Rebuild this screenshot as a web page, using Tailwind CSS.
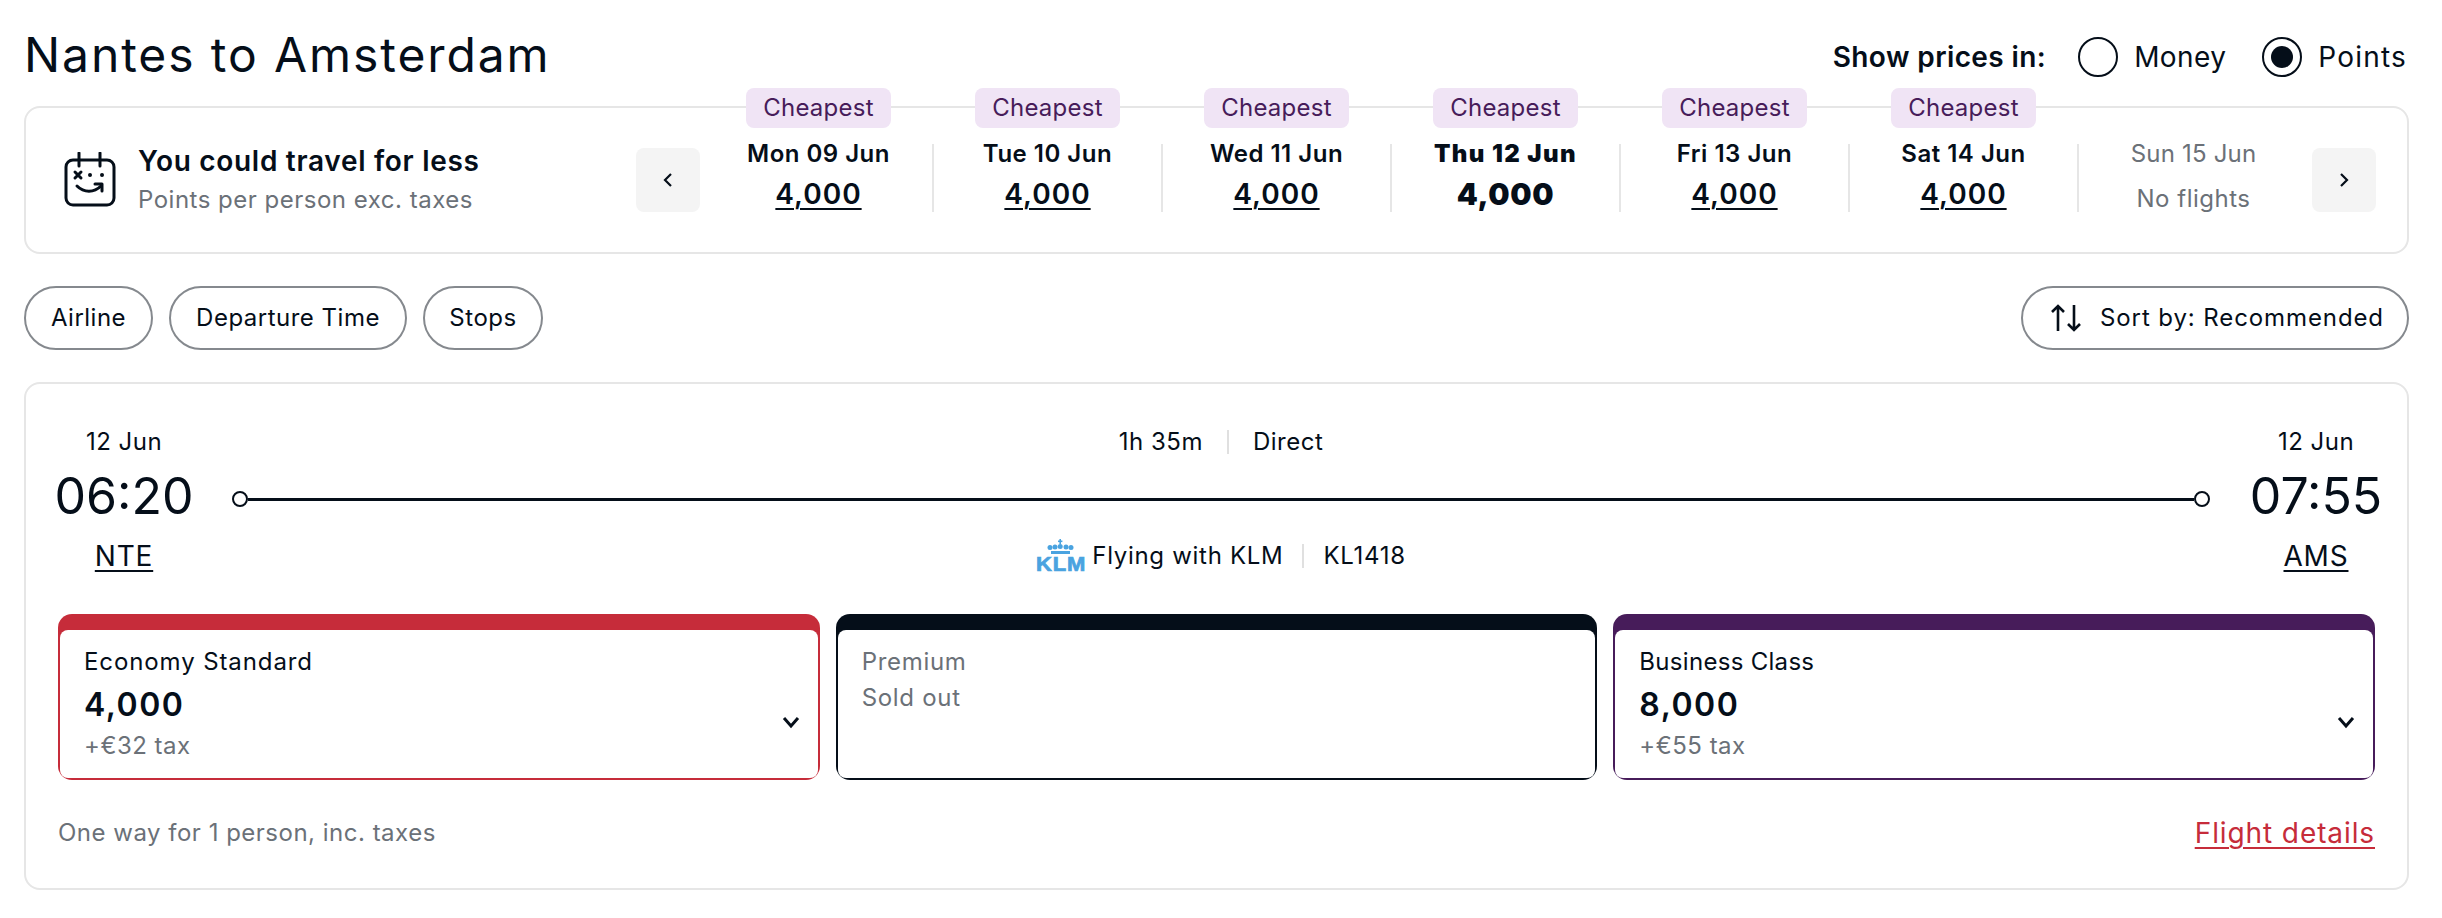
<!DOCTYPE html>
<html>

<head>
    <title>Nantes to Amsterdam</title>
    <script src="https://cdn.jsdelivr.net/npm/@tailwindcss/browser@4"></script>
</head>

<body class="bg-white text-[#050e19] tracking-[0.5px] [font-family:Inter,sans-serif]">
    <main class="w-[2442px] h-[918px] overflow-hidden pl-[24px] pr-[33px]">

        <!-- title + price mode -->
        <header class="h-[106px] flex items-center justify-between">
            <h1 class="text-[48px] mt-[3px] tracking-[1.9px]">Nantes to Amsterdam</h1>
            <div class="flex items-center mt-[8px] mr-[2px] text-[28px] tracking-[0.4px]">
                <span class="font-semibold mr-[32px]">Show prices in:</span>
                <span class="w-[40px] h-[40px] rounded-full border-2 border-[#050e19] mr-[16px]"></span>
                <span class="mr-[36px]">Money</span>
                <span class="w-[40px] h-[40px] rounded-full border-2 border-[#050e19] mr-[16px] flex items-center justify-center">
                    <span class="w-[22px] h-[22px] rounded-full bg-[#050e19]"></span>
                </span>
                <span class="tracking-[1.2px]">Points</span>
            </div>
        </header>

        <!-- date strip -->
        <section class="h-[148px] border-2 border-[#e6e6e6] rounded-[16px] flex items-center pl-[38px] pr-[31px]">
            <svg class="w-[52px] h-[56px] shrink-0 mr-[22px] -mt-[1px]" viewBox="0 0 52 56" fill="none" stroke="#050e19" stroke-width="3" stroke-linecap="round" stroke-linejoin="round">
                <rect x="2" y="8" width="48" height="45" rx="7" />
                <path d="M15 1v13M36 1v13" />
                <path d="M11 20l6 6M17 20l-6 6" />
                <path d="M26 23h.01M38 23h.01" stroke-width="4" />
                <path d="M13 34c7 7 17 7 24 0" />
                <path d="M31 32h7v7" />
            </svg>
            <div class="w-[498px] shrink-0">
                <div class="text-[28px] font-semibold leading-[36px] -mt-[2px] tracking-[0.7px]">You could travel for less</div>
                <div class="text-[24px] text-[#6b7178] leading-[32px] mt-[5px]">Points per person exc. taxes</div>
            </div>
            <button class="w-[64px] h-[64px] shrink-0 rounded-[8px] bg-[#f4f4f4] flex items-center justify-center">
                <svg class="w-[12px] h-[18px]" viewBox="0 0 12 18" fill="none" stroke="#050e19" stroke-width="2.2"><path d="M9 3L3 9l6 6" /></svg>
            </button>

            <div class="flex h-[68px] ml-[5px] -mt-[4px]">
                <div class="relative w-[229px] flex flex-col items-center border-r-2 border-[#e6e6e6]">
                    <span class="absolute -top-[56px] h-[40px] w-[145px] rounded-[8px] bg-[#f0e4f5] text-[#471c5a] text-[24px] tracking-[0.25px] flex items-center justify-center">Cheapest</span>
                    <span class="text-[24px] font-semibold leading-[32px] -mt-[6px]">Mon 09 Jun</span>
                    <span class="text-[28px] font-semibold leading-[36px] mt-[6px] tracking-[1px] underline decoration-2 underline-offset-[4px]">4,000</span>
                </div>
                <div class="relative w-[229px] flex flex-col items-center border-r-2 border-[#e6e6e6]">
                    <span class="absolute -top-[56px] h-[40px] w-[145px] rounded-[8px] bg-[#f0e4f5] text-[#471c5a] text-[24px] tracking-[0.25px] flex items-center justify-center">Cheapest</span>
                    <span class="text-[24px] font-semibold leading-[32px] -mt-[6px]">Tue 10 Jun</span>
                    <span class="text-[28px] font-semibold leading-[36px] mt-[6px] tracking-[1px] underline decoration-2 underline-offset-[4px]">4,000</span>
                </div>
                <div class="relative w-[229px] flex flex-col items-center border-r-2 border-[#e6e6e6]">
                    <span class="absolute -top-[56px] h-[40px] w-[145px] rounded-[8px] bg-[#f0e4f5] text-[#471c5a] text-[24px] tracking-[0.25px] flex items-center justify-center">Cheapest</span>
                    <span class="text-[24px] font-semibold leading-[32px] -mt-[6px]">Wed 11 Jun</span>
                    <span class="text-[28px] font-semibold leading-[36px] mt-[6px] tracking-[1px] underline decoration-2 underline-offset-[4px]">4,000</span>
                </div>
                <div class="relative w-[229px] flex flex-col items-center border-r-2 border-[#e6e6e6]">
                    <span class="absolute -top-[56px] h-[40px] w-[145px] rounded-[8px] bg-[#f0e4f5] text-[#471c5a] text-[24px] tracking-[0.25px] flex items-center justify-center">Cheapest</span>
                    <span class="text-[24px] font-black leading-[32px] -mt-[6px] tracking-[1.4px]">Thu 12 Jun</span>
                    <span class="text-[30px] font-black leading-[36px] mt-[6px] tracking-[0.6px]">4,000</span>
                </div>
                <div class="relative w-[229px] flex flex-col items-center border-r-2 border-[#e6e6e6]">
                    <span class="absolute -top-[56px] h-[40px] w-[145px] rounded-[8px] bg-[#f0e4f5] text-[#471c5a] text-[24px] tracking-[0.25px] flex items-center justify-center">Cheapest</span>
                    <span class="text-[24px] font-semibold leading-[32px] -mt-[6px]">Fri 13 Jun</span>
                    <span class="text-[28px] font-semibold leading-[36px] mt-[6px] tracking-[1px] underline decoration-2 underline-offset-[4px]">4,000</span>
                </div>
                <div class="relative w-[229px] flex flex-col items-center border-r-2 border-[#e6e6e6]">
                    <span class="absolute -top-[56px] h-[40px] w-[145px] rounded-[8px] bg-[#f0e4f5] text-[#471c5a] text-[24px] tracking-[0.25px] flex items-center justify-center">Cheapest</span>
                    <span class="text-[24px] font-semibold leading-[32px] -mt-[6px]">Sat 14 Jun</span>
                    <span class="text-[28px] font-semibold leading-[36px] mt-[6px] tracking-[1px] underline decoration-2 underline-offset-[4px]">4,000</span>
                </div>
                <div class="w-[229px] flex flex-col items-center text-[#6b7178] text-[24px]">
                    <span class="leading-[32px] -mt-[6px] tracking-[0.2px]">Sun 15 Jun</span>
                    <span class="leading-[32px] mt-[13px]">No flights</span>
                </div>
            </div>

            <button class="w-[64px] h-[64px] shrink-0 rounded-[8px] bg-[#f4f4f4] flex items-center justify-center ml-[4px]">
                <svg class="w-[12px] h-[18px]" viewBox="0 0 12 18" fill="none" stroke="#050e19" stroke-width="2.2"><path d="M3 3l6 6-6 6" /></svg>
            </button>
        </section>

        <!-- filters -->
        <div class="flex justify-between mt-[32px] h-[64px] text-[24px]">
            <div class="flex gap-[16px]">
                <button class="h-full w-[129px] rounded-[32px] border-2 border-[#85898e]">Airline</button>
                <button class="h-full w-[238px] rounded-[32px] border-2 border-[#85898e]">Departure Time</button>
                <button class="h-full w-[120px] rounded-[32px] border-2 border-[#85898e]">Stops</button>
            </div>
            <button class="h-full w-[388px] rounded-[32px] border-2 border-[#85898e] flex items-center pl-[27px] tracking-[0.9px]">
                <svg class="w-[32px] h-[30px] mr-[18px]" viewBox="0 0 32 30" fill="none" stroke="#050e19" stroke-width="2.6">
                    <path d="M8 28V3M2 9l6-6 6 6" />
                    <path d="M24 2v25M18 21l6 6 6-6" />
                </svg>
                Sort by: Recommended
            </button>
        </div>

        <!-- flight card -->
        <section class="mt-[32px] h-[508px] border-2 border-[#e6e6e6] rounded-[16px] pt-[42px] px-[32px]">
            <div class="flex -ml-[4px] -mr-[11px] h-[146px]">
                <div class="w-[140px] flex flex-col items-center">
                    <span class="text-[24px] leading-[32px]">12 Jun</span>
                    <span class="text-[50px] leading-[60px] mt-[8px] tracking-[0px]">06:20</span>
                    <span class="text-[28px] leading-[36px] mt-[12px] tracking-[0.8px] underline decoration-2 underline-offset-[4px]">NTE</span>
                </div>
                <div class="flex-1 ml-[38px] mr-[36px] flex flex-col items-center">
                    <div class="h-[32px] shrink-0 flex items-center text-[24px]">
                        <span>1h 35m</span>
                        <span class="w-[2px] h-[24px] bg-[#e0e0e0] mx-[24px]"></span>
                        <span>Direct</span>
                    </div>
                    <div class="w-full h-[60px] shrink-0 mt-[11px] flex items-center">
                        <span class="w-[16px] h-[16px] rounded-full border-2 border-[#050e19] shrink-0"></span>
                        <span class="flex-1 h-[3px] bg-[#050e19]"></span>
                        <span class="w-[16px] h-[16px] rounded-full border-2 border-[#050e19] shrink-0"></span>
                    </div>
                    <div class="h-[36px] shrink-0 mt-[9px] flex items-center text-[24px] tracking-[0.7px]">
                        <svg class="w-[50px] h-[38px] mr-[6px] mt-[4px]" viewBox="0 0 50 38">
                            <g fill="#4aa3e0" stroke="none">
                                <rect x="23.4" y="0" width="1.6" height="5" />
                                <rect x="22" y="1.5" width="4.4" height="1.6" />
                                <circle cx="14" cy="8.4" r="2.5" />
                                <circle cx="19" cy="8" r="2.5" />
                                <circle cx="24.2" cy="7.6" r="2.5" />
                                <circle cx="30" cy="8" r="2.5" />
                                <circle cx="35" cy="8.4" r="2.5" />
                                <rect x="15" y="12" width="19" height="3" />
                                <text x="0" y="32" font-family="Liberation Sans" font-weight="700" font-size="19.5" stroke="#4aa3e0" stroke-width="0.7" textLength="50" lengthAdjust="spacingAndGlyphs">KLM</text>
                            </g>
                        </svg>
                        <span>Flying with KLM</span>
                        <span class="w-[2px] h-[24px] bg-[#e0e0e0] mx-[19px]"></span>
                        <span>KL1418</span>
                    </div>
                </div>
                <div class="w-[140px] flex flex-col items-center">
                    <span class="text-[24px] leading-[32px]">12 Jun</span>
                    <span class="text-[50px] leading-[60px] mt-[8px] tracking-[0px]">07:55</span>
                    <span class="text-[28px] leading-[36px] mt-[12px] tracking-[0.8px] underline decoration-2 underline-offset-[4px]">AMS</span>
                </div>
            </div>

            <div class="grid grid-cols-3 gap-[16px] mt-[42px]">
                <div class="h-[166px] rounded-[14px] bg-[#c62c3a] p-[2px] pt-[16px]">
                    <div class="h-full rounded-[8px] bg-white pl-[24px] pr-[20px] pt-[16px] relative">
                        <div class="text-[24px] leading-[32px] tracking-[0.9px]">Economy Standard</div>
                        <div class="text-[32px] font-semibold leading-[40px] mt-[7px] tracking-[1.5px]">4,000</div>
                        <div class="text-[24px] leading-[32px] mt-[5px] text-[#6b7178]">+€32 tax</div>
                        <svg class="absolute right-[18px] top-[85px] w-[18px] h-[14px]" viewBox="0 0 18 14" fill="none" stroke="#050e19" stroke-width="3"><path d="M2 3l7 8 7-8" /></svg>
                    </div>
                </div>
                <div class="h-[166px] rounded-[14px] bg-[#050e19] p-[2px] pt-[16px]">
                    <div class="h-full rounded-[8px] bg-white pl-[24px] pr-[20px] pt-[16px] text-[24px] text-[#6b7178] tracking-[0.7px]">
                        <div class="leading-[32px]">Premium</div>
                        <div class="leading-[32px] mt-[4px]">Sold out</div>
                    </div>
                </div>
                <div class="h-[166px] rounded-[14px] bg-[#471c5a] p-[2px] pt-[16px]">
                    <div class="h-full rounded-[8px] bg-white pl-[24px] pr-[20px] pt-[16px] relative">
                        <div class="text-[24px] leading-[32px] tracking-[0.3px]">Business Class</div>
                        <div class="text-[32px] font-semibold leading-[40px] mt-[7px] tracking-[1.5px]">8,000</div>
                        <div class="text-[24px] leading-[32px] mt-[5px] text-[#6b7178]">+€55 tax</div>
                        <svg class="absolute right-[18px] top-[85px] w-[18px] h-[14px]" viewBox="0 0 18 14" fill="none" stroke="#050e19" stroke-width="3"><path d="M2 3l7 8 7-8" /></svg>
                    </div>
                </div>
            </div>

            <div class="flex justify-between items-center mt-[35px] h-[36px]">
                <span class="text-[24px] text-[#6b7178]">One way for 1 person, inc. taxes</span>
                <a class="text-[28px] text-[#c62c3a] tracking-[0.9px] underline decoration-2 underline-offset-[4px]">Flight details</a>
            </div>
        </section>
    </main>
</body>

</html>
